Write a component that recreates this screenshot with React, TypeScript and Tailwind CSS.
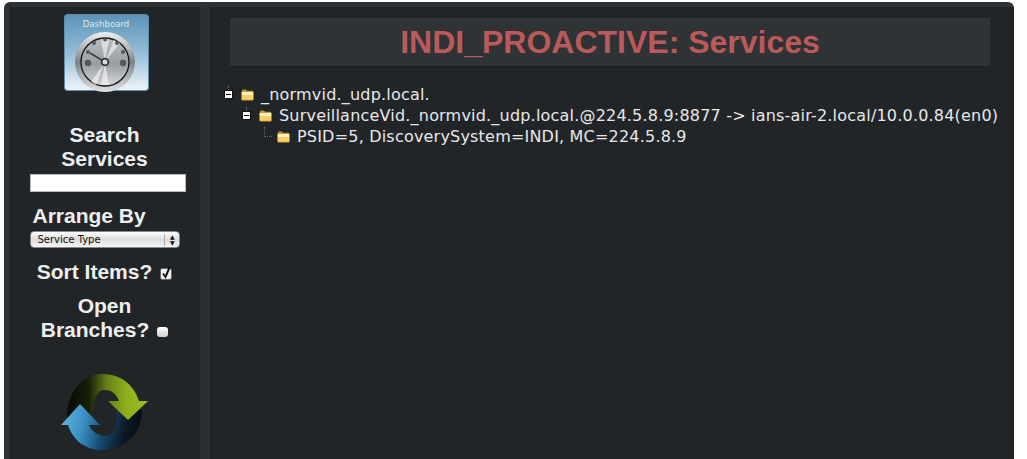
const Gauge = () => (
  <svg width="86" height="80" viewBox="0 0 86 80" className="block">
    <defs>
      <linearGradient id="tile" x1="0" y1="0" x2="0" y2="1">
        <stop offset="0" stopColor="#5b93b8" />
        <stop offset="0.5" stopColor="#93bcd6" />
        <stop offset="1" stopColor="#eef5fa" />
      </linearGradient>
      <linearGradient id="rim" x1="0" y1="0" x2="0" y2="1">
        <stop offset="0" stopColor="#f0f0f0" />
        <stop offset="0.5" stopColor="#7f8388" />
        <stop offset="1" stopColor="#e2e2e2" />
      </linearGradient>
      <linearGradient id="face" x1="0" y1="0" x2="0" y2="1">
        <stop offset="0" stopColor="#b9bcbf" />
        <stop offset="0.55" stopColor="#9a9ea2" />
        <stop offset="1" stopColor="#d6d7d8" />
      </linearGradient>
    </defs>
    <rect x="0.5" y="0.5" width="84" height="76" rx="3" fill="url(#tile)" stroke="#5f8fae" />
    <text x="42" y="13" textAnchor="middle" fontSize="8.6" fontWeight="400" fill="#dbe9f2" fontFamily="'DejaVu Sans', sans-serif">Dashboard</text>
    <circle cx="41" cy="48" r="30" fill="url(#rim)" />
    <circle cx="41" cy="48" r="24" fill="url(#face)" stroke="#151515" strokeWidth="1.3" />
    <path d="M41 48 L37 25 L45 25 Z M41 48 L50 26 L56 29 Z M41 48 L32 71 L27 68 Z M41 48 L37 71 L45 71 Z" fill="#f2f2f2" opacity="0.65" />
    <g fill="#55595d">
      <circle cx="30" cy="29" r="2" />
      <circle cx="41" cy="25.5" r="2" />
      <circle cx="53" cy="29" r="2" />
      <circle cx="24" cy="38" r="2" />
      <circle cx="59" cy="38" r="2" />
      <circle cx="24" cy="49" r="3.2" />
      <circle cx="59" cy="49" r="3.2" />
    </g>
    <path d="M26 39 L41 48" stroke="#3c3f42" strokeWidth="1.6" />
    <circle cx="41" cy="48" r="3.4" fill="#d9dadb" stroke="#33363a" strokeWidth="1.8" />
  </svg>
);

const RefreshArrows = () => (
  <svg width="130" height="99" viewBox="0 0 130 99" className="block">
    <defs>
      <linearGradient id="green" gradientUnits="userSpaceOnUse" x1="27" y1="0" x2="109" y2="0">
        <stop offset="0" stopColor="#060705" />
        <stop offset="0.28" stopColor="#1a2008" />
        <stop offset="0.5" stopColor="#66801a" />
        <stop offset="0.72" stopColor="#8bad1c" />
        <stop offset="1" stopColor="#9cc31e" />
      </linearGradient>
      <linearGradient id="blue" gradientUnits="userSpaceOnUse" x1="22" y1="50" x2="103" y2="70">
        <stop offset="0" stopColor="#62b8e4" />
        <stop offset="0.3" stopColor="#3a8fc0" />
        <stop offset="0.55" stopColor="#154a70" />
        <stop offset="0.8" stopColor="#0c1a26" />
        <stop offset="1" stopColor="#080b10" />
      </linearGradient>
    </defs>
    {/* green band, blue arrow over it, then the green head over the blue tail */}
    <path d="M29 66 C24 34 44 14 63 14 C82 14 95 25 100 41 L80 41 C77 33 72 30 65 30 C58 30 53 40 53 66 Z" fill="url(#green)" />
    <path d="M41 44 L61 65 L50 65 C53 72 60 76 67 76 C74 76 78 68 78 50 L103 50 C103 74 86 90 63 90 C46 90 34 80 29 65 L22 65 Z" fill="url(#blue)" />
    <path d="M100 41 L109 41 L89 60 L69 41 L80 41 Z" fill="url(#green)" />
  </svg>
);

const Folder = () => (
  <svg width="13" height="12" viewBox="0 0 13 12" className="block shrink-0">
    <path d="M1 3 V1.4 C1 .8 1.4 .5 2 .5 H5 L6 1.8 H11 C11.6 1.8 12 2.2 12 3 Z" fill="#b8923f" />
    <rect x="0.5" y="2.6" width="12" height="8.6" rx="1" fill="#f7cf62" stroke="#a98535" strokeWidth="0.6" />
    <rect x="1" y="3" width="11" height="3" fill="#fff0b8" />
  </svg>
);

const Toggle = () => (
  <span className="w-[9px] h-[9px] bg-white border border-[#111] flex items-center justify-center shrink-0">
    <span className="w-[5px] h-[1.5px] bg-black" />
  </span>
);

const TreeRow = ({ indent, toggle, text }: { indent: string; toggle: boolean; text: string }) => (
  <div className={`relative flex items-center h-[21px] ${indent}`}>
    {toggle ? (
      <span className="relative">
        <span className="absolute left-[4px] top-[-4px] h-[4px] border-l border-dotted border-[#666]" />
        <Toggle />
      </span>
    ) : (
      <span className="relative w-[9px]">
        <span className="absolute left-[4px] top-[-10px] w-[8px] h-[10px] border-l border-b border-dotted border-[#666]" />
      </span>
    )}
    <span className="ml-[8px]">
      <Folder />
    </span>
    <span className="ml-[7px] whitespace-nowrap">{text}</span>
  </div>
);

export default function App() {
  return (
    <div className="w-[1027px] h-[459px] overflow-hidden bg-white pt-[2px] pl-[4px] pr-[13px]">
      <div className="h-[457px] flex rounded-t-[6px] bg-[#2e3235] pt-[5px] pl-[5px] overflow-hidden">
        {/* Sidebar */}
        <div className="w-[191px] shrink-0 bg-[#212528] flex flex-col items-center text-[#eeeeee] font-bold text-[21px] leading-[24px] font-['Liberation_Sans',sans-serif] text-center">
          <div className="mt-[7px] ml-[5px]">
            <Gauge />
          </div>
          <div className="mt-[29px] w-[120px]">Search Services</div>
          <div className="mt-[3px] ml-[6px] w-[156px] h-[18px] bg-white border border-[#bbb]" />
          <div className="mt-[12px] ml-[6px] w-[156px] text-left pl-[3px]">Arrange By</div>
          <div className="mt-[3px] w-[150px] h-[17px] rounded-[4px] border border-[#888] bg-gradient-to-b from-[#ffffff] via-[#dcdcdc] to-[#f6f6f6] flex items-center pl-[7px] pr-[4px] text-[10px] font-normal text-[#111] font-['DejaVu_Sans',sans-serif]">
            <span className="flex-1 text-left">Service Type</span>
            <span className="border-l border-[#aaa] pl-[5px] text-[6px] leading-[6px] flex flex-col">
              <span>▲</span>
              <span>▼</span>
            </span>
          </div>
          <div className="mt-[12px] flex items-center gap-[8px] whitespace-nowrap">
            Sort Items?
            <svg width="12" height="14" viewBox="0 0 12 14" className="block mt-[2px]">
              <rect x="0.5" y="2.5" width="11" height="11" rx="2" fill="#f2f2f2" stroke="#666" />
              <path d="M3 7.5 L5.5 11 L9.5 1.5" fill="none" stroke="#111" strokeWidth="2" />
            </svg>
          </div>
          <div className="mt-[10px] w-[150px]">Open</div>
          <div className="flex items-center gap-[8px] whitespace-nowrap">
            Branches?
            <span className="w-[11px] h-[10px] rounded-[3px] bg-gradient-to-b from-white to-[#cfcfcf] mt-[4px]" />
          </div>
          <div className="mt-[18px] ml-[-1px]">
            <RefreshArrows />
          </div>
        </div>

        {/* Divider strip */}
        <div className="w-[10px] shrink-0 bg-[#2b2f32]" />

        {/* Main panel */}
        <div className="flex-1 min-w-0 bg-[#212528] pt-[11px] pl-[20px] pr-[24px]">
          <div className="h-[49px] bg-[#2f3336] border-b border-[#191c1e] flex items-center justify-center font-bold text-[32px] text-[#bb5a5a] font-['Liberation_Sans',sans-serif]">
            INDI_PROACTIVE: Services
          </div>
          <div className="mt-[17px] ml-[-6px] text-[#e8e8e8] text-[16px] tracking-[0.2px] font-['DejaVu_Sans',sans-serif]">
            <TreeRow indent="" toggle text="_normvid._udp.local." />
            <TreeRow indent="pl-[18px]" toggle text="SurveillanceVid._normvid._udp.local.@224.5.8.9:8877 -> ians-air-2.local/10.0.0.84(en0)" />
            <TreeRow indent="pl-[36px]" toggle={false} text="PSID=5, DiscoverySystem=INDI, MC=224.5.8.9" />
          </div>
        </div>
      </div>
    </div>
  );
}
